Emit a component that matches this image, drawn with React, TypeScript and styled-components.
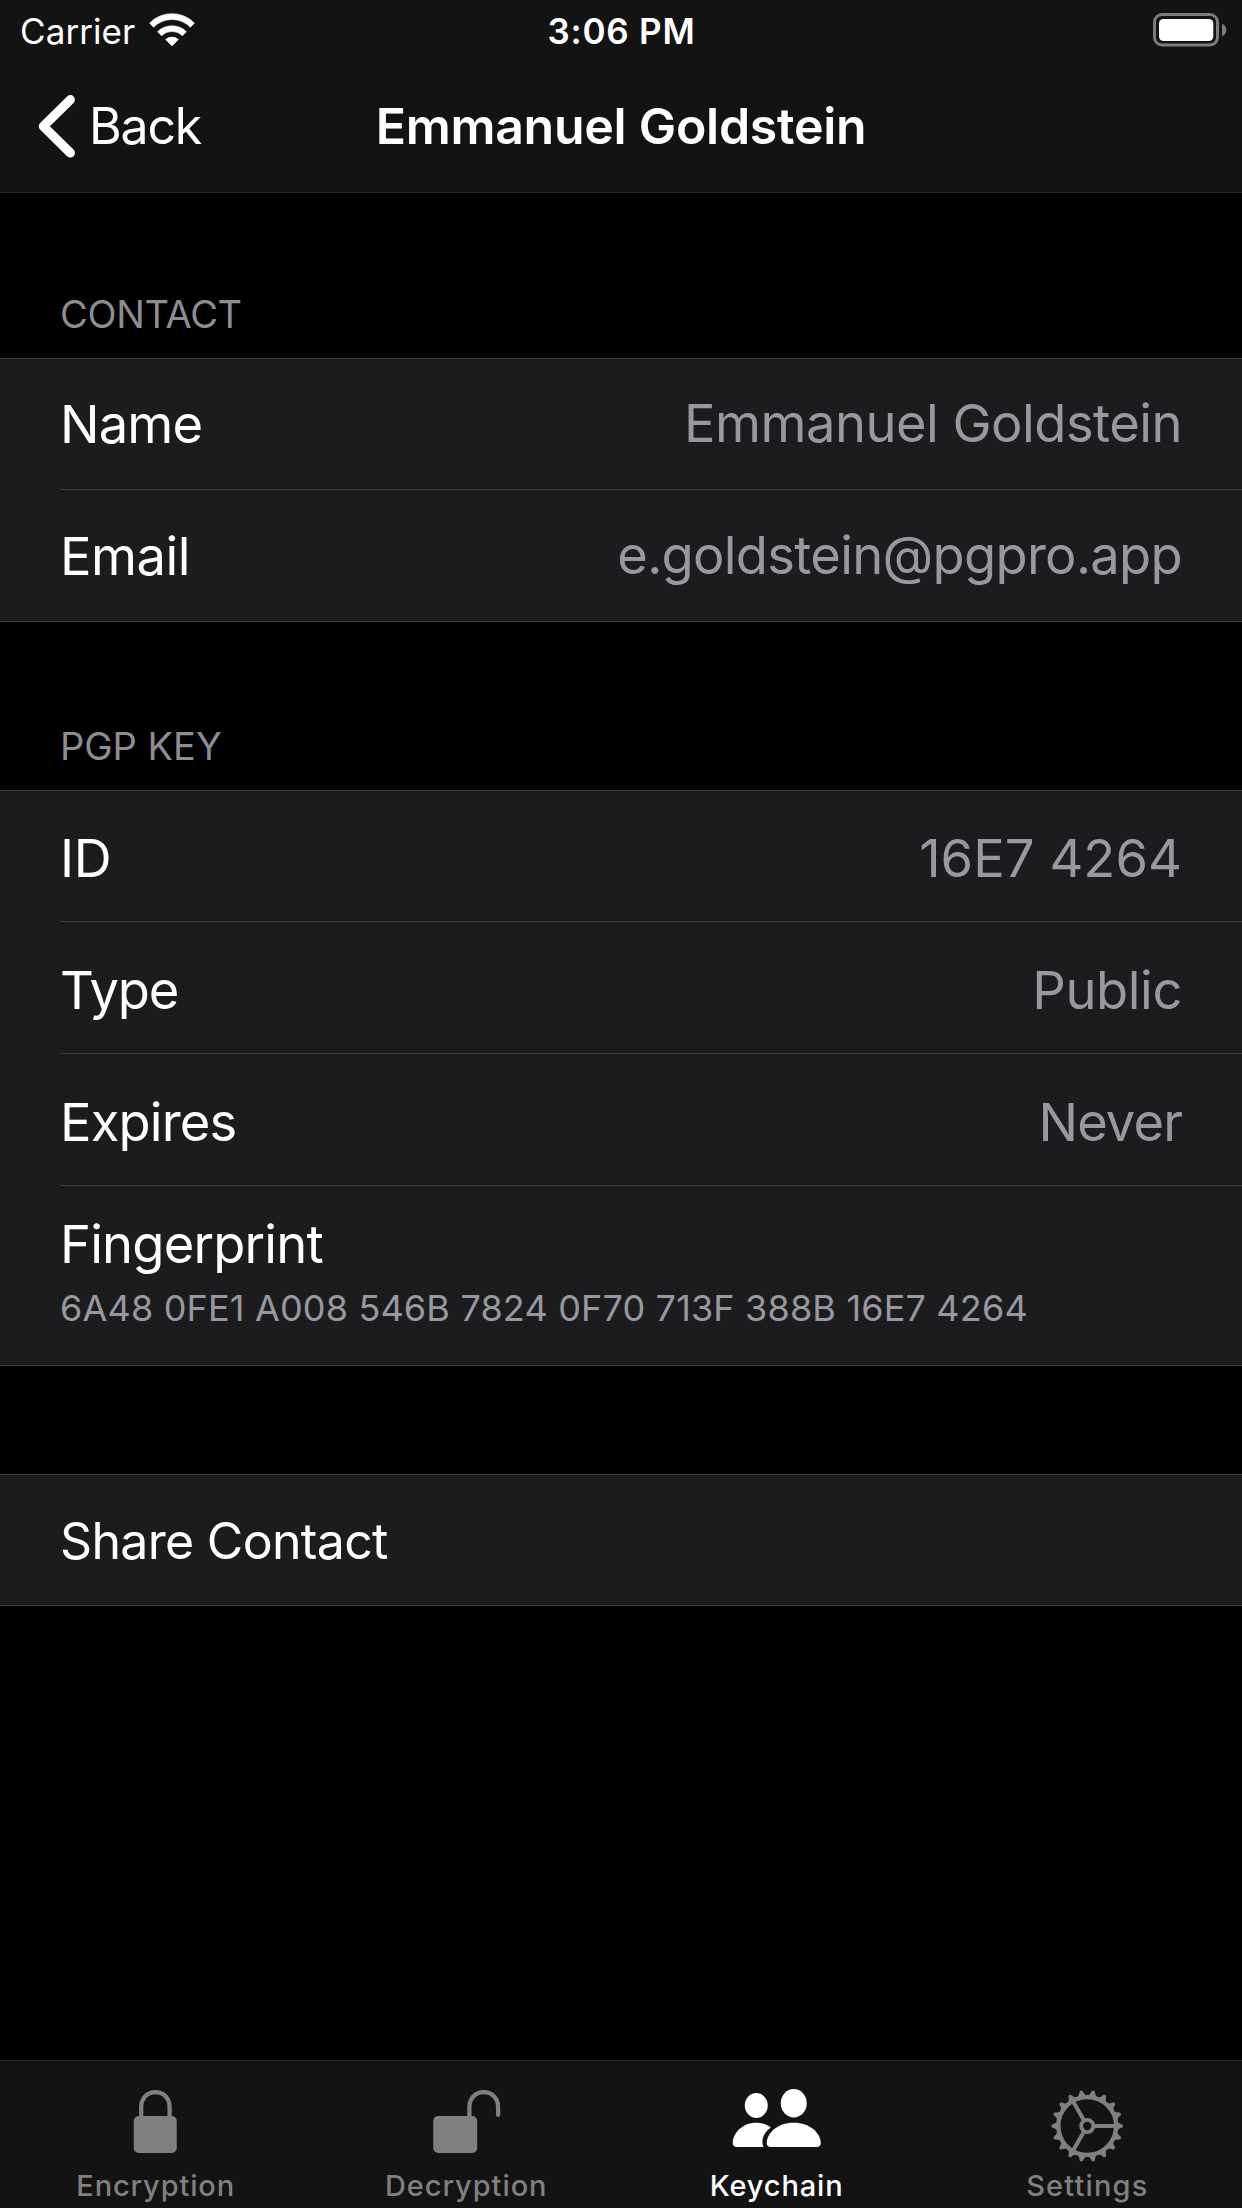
import React from "react";
import styled, { createGlobalStyle } from "styled-components";

const colors = {
  bar: "#131313",
  barLine: "#292929",
  cell: "#1c1c1e",
  line: "#3d3d41",
  secondary: "#98989f",
  header: "#8d8d93",
  inactive: "#808080",
};

const GlobalStyle = createGlobalStyle`
  * { box-sizing: border-box; }
  body {
    margin: 0;
    background: #000;
    color: #fff;
    font-family: Inter, "Liberation Sans", sans-serif;
  }
`;

const Screen = styled.div`
  width: 1242px;
  height: 2208px;
  display: flex;
  flex-direction: column;
  background: #000;
  overflow: hidden;
`;

const TopBar = styled.header`
  background: ${colors.bar};
  border-bottom: 1px solid ${colors.barLine};
`;

const StatusBar = styled.div`
  height: 60px;
  padding: 10px 15px 0 20px;
  display: grid;
  grid-template-columns: 1fr auto 1fr;
  align-items: start;
  font-size: 35px;
  line-height: 42px;
`;

const Carrier = styled.div`
  display: flex;
  gap: 14px;
  letter-spacing: 0.08px;
`;

const Clock = styled.div`
  margin-right: 4px;
  font-weight: 600;
  letter-spacing: 0.76px;
`;

const WifiIcon = styled.svg`
  width: 46px;
  height: 34px;
  margin-top: 3px;
`;

const BatteryIcon = styled.svg`
  width: 74px;
  height: 34px;
  margin-top: 3px;
  justify-self: end;
`;

const NavBar = styled.nav`
  height: 132px;
  padding: 36px 36px 0 36px;
  display: grid;
  grid-template-columns: 1fr auto 1fr;
  align-items: start;
  font-size: 50px;
  line-height: 60px;
`;

const BackButton = styled.button`
  display: flex;
  gap: 10px;
  padding: 0;
  border: 0;
  background: none;
  color: #fff;
  font: inherit;
  letter-spacing: -1.2px;
`;

const Chevron = styled.svg`
  width: 43px;
  height: 66px;
  margin-top: -3px;
`;

const Title = styled.h1`
  margin: 0;
  font-size: 50px;
  font-weight: 600;
  letter-spacing: -0.27px;
`;

const Content = styled.main`
  flex: 1;
`;

const SectionHeader = styled.h2<{ $height: number; $spacing: number }>`
  margin: 0;
  height: ${(p) => p.$height}px;
  padding: 0 60px 21px;
  display: flex;
  align-items: flex-end;
  color: ${colors.header};
  font-size: 38px;
  font-weight: 400;
  line-height: 46px;
  letter-spacing: ${(p) => p.$spacing}px;
`;

const Group = styled.section<{ $gap?: number }>`
  margin-top: ${(p) => p.$gap ?? 0}px;
  padding-left: 60px;
  background: ${colors.cell};
  border-top: 1px solid ${colors.line};
  border-bottom: 1px solid ${colors.line};
`;

const Row = styled.div<{ $height: number; $column?: boolean }>`
  height: ${(p) => p.$height}px;
  padding-right: 60px;
  display: flex;
  flex-direction: ${(p) => (p.$column ? "column" : "row")};
  justify-content: ${(p) => (p.$column ? "flex-start" : "space-between")};
  align-items: flex-start;
  white-space: nowrap;

  & + & {
    box-sizing: content-box;
    border-top: 1px solid ${colors.line};
  }
`;

const Label = styled.span<{ $top: number; $spacing: number }>`
  padding-top: ${(p) => p.$top}px;
  font-size: 52.5px;
  line-height: 64px;
  letter-spacing: ${(p) => p.$spacing}px;
`;

const Value = styled(Label)`
  color: ${colors.secondary};
`;

const Fingerprint = styled.span`
  margin-top: 10px;
  color: ${colors.secondary};
  font-size: 36px;
  line-height: 44px;
  letter-spacing: 0.17px;
`;

const Action = styled.span`
  padding-top: 36px;
  font-size: 50px;
  line-height: 60px;
  letter-spacing: -0.68px;
`;

const TabBar = styled.footer`
  height: 148px;
  display: grid;
  grid-template-columns: repeat(4, 1fr);
  background: ${colors.bar};
  border-top: 1px solid ${colors.barLine};
`;

const Tab = styled.div<{ $active?: boolean }>`
  padding-top: 26px;
  display: flex;
  flex-direction: column;
  align-items: center;
  color: ${(p) => (p.$active ? "#fff" : colors.inactive)};
`;

const TabIcon = styled.svg`
  width: 90px;
  height: 81px;
`;

const TabLabel = styled.span<{ $spacing: number }>`
  margin-right: -${(p) => p.$spacing}px;
  font-size: 29px;
  font-weight: 500;
  line-height: 35px;
  letter-spacing: ${(p) => p.$spacing}px;
`;

type Field = {
  label: string;
  value: string;
  height: number;
  top: number;
  valueTop: number;
  spacing: number;
  valueSpacing: number;
};

const contactFields: Field[] = [
  { label: "Name", value: "Emmanuel Goldstein", height: 130, top: 33, valueTop: 32, spacing: -0.87, valueSpacing: -0.52 },
  { label: "Email", value: "e.goldstein@pgpro.app", height: 131, top: 34, valueTop: 33, spacing: -0.5, valueSpacing: -0.7 },
];

const keyFields: Field[] = [
  { label: "ID", value: "16E7 4264", height: 130, top: 35, valueTop: 35, spacing: -0.4, valueSpacing: 0.05 },
  { label: "Type", value: "Public", height: 131, top: 36, valueTop: 36, spacing: -1.2, valueSpacing: -0.4 },
  { label: "Expires", value: "Never", height: 131, top: 36, valueTop: 36, spacing: -0.85, valueSpacing: -0.9 },
];

const FieldRow = ({ field }: { field: Field }) => (
  <Row $height={field.height}>
    <Label $top={field.top} $spacing={field.spacing}>{field.label}</Label>
    <Value $top={field.valueTop} $spacing={field.valueSpacing}>{field.value}</Value>
  </Row>
);

const LockGlyph = () => (
  <TabIcon viewBox="0 0 90 81">
    <rect x="23.75" y="29" width="43" height="37" rx="5" fill="currentColor" />
    <path d="M31.2 31V19.8C31.2 11 37.4 5.15 45.4 5.15S59.6 11 59.6 19.8V31" fill="none" stroke="currentColor" strokeWidth="4.3" />
  </TabIcon>
);

const UnlockGlyph = () => (
  <TabIcon viewBox="0 0 90 81">
    <rect x="12.25" y="29" width="44" height="37" rx="5" fill="currentColor" />
    <path d="M48.4 31V19.8C48.4 11 54.7 5.15 62.75 5.15S77.1 11 77.1 19.8V27.8" fill="none" stroke="currentColor" strokeWidth="4.3" strokeLinecap="round" />
  </TabIcon>
);

const PeopleGlyph = () => (
  <TabIcon viewBox="0 0 90 81" fill="currentColor">
    <ellipse cx="25.25" cy="18.5" rx="11.5" ry="12.5" />
    <ellipse cx="62.75" cy="16.2" rx="13" ry="14.2" />
    <path d="M6 60Q1.75 60 1.75 56C1.75 46.5 11 35.7 25.25 35.7C31 35.7 36 37.5 39.75 40.5C33 45.5 29.5 53 32.4 60Z" />
    <path d="M40 60Q35.75 60 35.75 56C35.75 46.5 46 35.7 62.75 35.7S89.75 46.5 89.75 56Q89.75 60 85.5 60Z" />
  </TabIcon>
);

const teeth = Array.from({ length: 18 }, (_, i) => i * 20);

const GearGlyph = () => (
  <TabIcon viewBox="0 0 90 81">
    <g transform="translate(45.25 39)" fill="none" stroke="currentColor">
      <circle r="28.9" strokeWidth="4.4" />
      <circle r="6.1" strokeWidth="3.8" />
      {[0, 120, 240].map((a) => (
        <path key={a} d="M7 0H28" strokeWidth="4" transform={`rotate(${a})`} />
      ))}
      {teeth.map((a) => (
        <path key={a} d="M30 -4.2Q32.5 -2.2 35.2 -1.5Q36.6 0 35.2 1.5Q32.5 2.2 30 4.2Z" fill="currentColor" stroke="none" transform={`rotate(${a})`} />
      ))}
    </g>
  </TabIcon>
);

export default function App() {
  return (
    <>
      <GlobalStyle />
      <Screen>
        <TopBar>
          <StatusBar>
            <Carrier>
              <span>Carrier</span>
              <WifiIcon viewBox="0 0 46 34" fill="#fff" stroke="#fff" strokeWidth="0.6" strokeLinejoin="round">
                <path d="M0.6 10A31.5 31.5 0 0 1 45.4 10L41.5 14.2A26 26 0 0 0 4.5 14.2Z" />
                <path d="M8.6 18.7A20.5 20.5 0 0 1 37.4 18.7L33.5 22.7A15 15 0 0 0 12.5 22.7Z" />
                <path d="M16.6 26.6A9.5 9.5 0 0 1 29.4 26.6L23 33Z" />
              </WifiIcon>
            </Carrier>
            <Clock>3:06 PM</Clock>
            <BatteryIcon viewBox="0 0 74 34">
              <rect x="1.5" y="1.5" width="63" height="30.5" rx="7.5" fill="none" stroke="#7c7c7c" strokeWidth="3" />
              <rect x="6" y="6" width="54.3" height="22" rx="4.5" fill="#fff" />
              <path d="M69 10.8Q73.3 12.5 73.3 17T69 23.2Z" fill="#7c7c7c" />
            </BatteryIcon>
          </StatusBar>
          <NavBar>
            <BackButton>
              <Chevron viewBox="0 0 43 66">
                <path d="M34.3 6.7L7.3 33.3L34.3 59.9" fill="none" stroke="#fff" strokeWidth="9.2" strokeLinecap="round" strokeLinejoin="round" />
              </Chevron>
              <span>Back</span>
            </BackButton>
            <Title>Emmanuel Goldstein</Title>
          </NavBar>
        </TopBar>

        <Content>
          <SectionHeader $height={165} $spacing={-0.3}>CONTACT</SectionHeader>
          <Group>
            {contactFields.map((f) => <FieldRow key={f.label} field={f} />)}
          </Group>

          <SectionHeader $height={168} $spacing={0}>PGP KEY</SectionHeader>
          <Group>
            {keyFields.map((f) => <FieldRow key={f.label} field={f} />)}
            <Row $height={179} $column>
              <Label $top={26} $spacing={-0.82}>Fingerprint</Label>
              <Fingerprint>6A48 0FE1 A008 546B 7824 0F70 713F 388B 16E7 4264</Fingerprint>
            </Row>
          </Group>

          <Group $gap={108}>
            <Row $height={130}>
              <Action>Share Contact</Action>
            </Row>
          </Group>
        </Content>

        <TabBar>
          <Tab><LockGlyph /><TabLabel $spacing={0.87}>Encryption</TabLabel></Tab>
          <Tab><UnlockGlyph /><TabLabel $spacing={0.95}>Decryption</TabLabel></Tab>
          <Tab $active><PeopleGlyph /><TabLabel $spacing={0.85}>Keychain</TabLabel></Tab>
          <Tab><GearGlyph /><TabLabel $spacing={1.15}>Settings</TabLabel></Tab>
        </TabBar>
      </Screen>
    </>
  );
}
